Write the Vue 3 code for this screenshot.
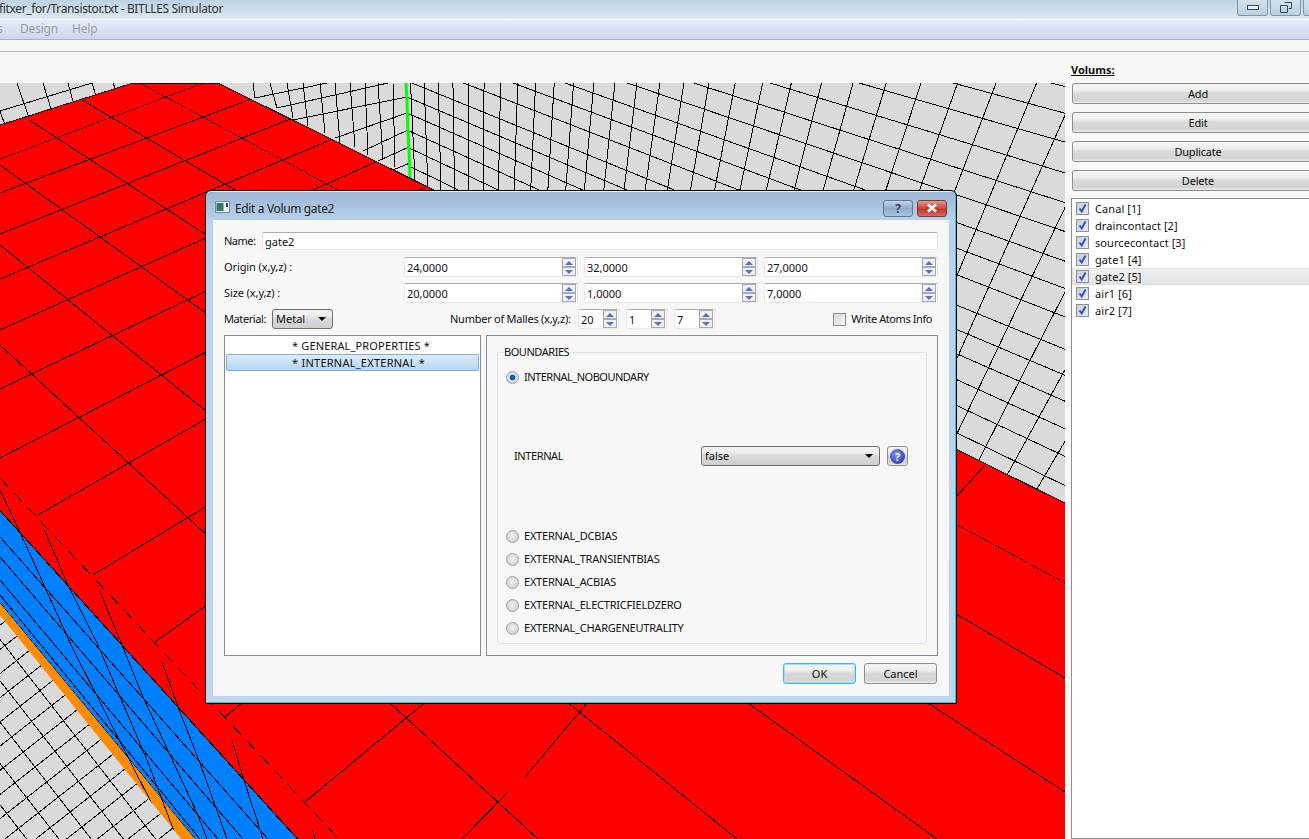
<script setup>
const edgeY = (x) => 83 + 0.496 * (x - 218)
const floorLines = [
  [140,83,1065,583,'dot'],[82,100,1065,678],[0,101,1065,792],[0,165,937,839],[0,245,737,839],[0,345,538,839],
  [0,159,254,64,'dot'],[0,193,254,98],[0,234,293,118],[0,279,335,138],[0,330,378,161],[0,389,440,180],[0,458,440,232],[38,515,440,285],
  [93,575,440,365],[155,642,440,440],[225,717,320,640],[305,802,440,690],[462,839,508,792],[525,777,640,640],[957,496,985,465],
  [0,478,337,837,'dash']
]
const bandLines = [
  [0,537,268,839],[0,557,243,839],[0,580,218,839],[0,595,200,839],
  [0,490,20,532],[20,532,72,647],[72,647,133,767],[133,767,170,839],
  [38,515,67,583],[67,583,97,643],[97,643,147,760],[147,760,177,839],
  [93,575,120,640],[120,640,143,697],[143,697,197,813],[197,813,207,839],
  [155,642,178,707],[178,707,200,763],[200,763,227,839],
  [225,717,243,777],[243,777,263,839],[305,802,315,839]
]
const VP1 = [-650,-350], VP3 = [473,1447]
const rightRows = [165,147,130,113,97,81,61,43.5,26.7,8.4,-9.4,-27.7,-46.7,-64.5,-81].map((y) => {
  const s = (y - VP1[1]) / (407 - VP1[0])
  return [407, y, 1065, y + s * 658]
})
const rightCols = []
for (let x = 415; x < 1100; x += 13 + (x - 420) * 0.028) {
  const y = edgeY(x)
  const s = (x - VP3[0]) / (VP3[1] - y)
  rightCols.push([x, y, x + s * (y + 20), -20])
}
const leftWall = [
  [388,83,277,108],[327,83,255,98],[407,97,293,120],[407,113,335,138],[408,130,363,151],[409,147,378,161],[410,163,393,170],
  [253,83,255,98],[270,83,277,108],[287,83,293,118],[303,83,308,126],[320,83,325,133],[335,83,340,143],[350,83,355,147],[365,83,368,155],[378,83,383,160],[393,83,395,167],
  [0,111,92,83],[0,111,5,125],[17,83,29,118],[43,83,52,112],[68,83,74,105],[92,83,96,96],[113,83,115,88]
]
const lattice = []
for (let k = -30; k <= 30; k++) {
  const bx = 35 + k * 20, by = 767 - k * 15.7
  lattice.push([bx - 40 * 11.7, by - 40 * 15, bx + 40 * 11.7, by + 40 * 15])
  const cx = 35 + k * 11.7, cy = 767 + k * 15
  lattice.push([cx - 40 * 20, cy + 40 * 15.7, cx + 40 * 20, cy - 40 * 15.7])
}
const volumes = ['Canal [1]','draincontact [2]','sourcecontact [3]','gate1 [4]','gate2 [5]','air1 [6]','air2 [7]']
const origin = ['24,0000','32,0000','27,0000']
const size = ['20,0000','1,0000','7,0000']
const malles = ['20','1','7']
const externals = ['EXTERNAL_DCBIAS','EXTERNAL_TRANSIENTBIAS','EXTERNAL_ACBIAS','EXTERNAL_ELECTRICFIELDZERO','EXTERNAL_CHARGENEUTRALITY']
</script>

<template>
  <div class="app">
    <div class="titlebar">
      <span class="title-text">fitxer_for/Transistor.txt - BITLLES Simulator</span>
      <div class="win-btns">
        <div class="win-btn"><span class="glyph-min"></span></div>
        <div class="win-btn">
          <svg width="12" height="11" viewBox="0 0 12 11"><path d="M4.5 .5h7v6h-3M.5 3.5h7v7h-7z" fill="none" stroke="#3a4a5a"/></svg>
        </div>
        <div class="win-btn"></div>
      </div>
    </div>
    <div class="menubar">
      <span class="menu-s">s</span><span class="menu-a">Design</span><span class="menu-b">Help</span>
    </div>
    <div class="toolstrip"></div>
    <div class="main">
      <div class="left-col">
        <div class="spacer"></div>
        <svg class="scene" width="1065" height="756" viewBox="0 83 1065 756">
          <defs>
            <clipPath id="floorClip"><polygon points="0,125 133,83 218,83 1065,503 1065,839 298,839 0,510" /></clipPath>
            <clipPath id="rightClip"><polygon points="407,83 1065,83 1065,503 410,178" /></clipPath>
            <clipPath id="grayClip"><polygon points="0,615 181,839 0,839" /></clipPath>
            <clipPath id="bandClip"><polygon points="0,480 320,839 181,839 0,615" /></clipPath>
          </defs>
          <rect x="0" y="83" width="1065" height="756" fill="#dadada" />
          <g class="ln" clip-path="url(#rightClip)">
            <line v-for="(l, i) in rightRows" :key="'r' + i" :x1="l[0]" :y1="l[1]" :x2="l[2]" :y2="l[3]" />
            <line v-for="(l, i) in rightCols" :key="'c' + i" :x1="l[0]" :y1="l[1]" :x2="l[2]" :y2="l[3]" />
          </g>
          <g class="ln">
            <line v-for="(l, i) in leftWall" :key="'w' + i" :x1="l[0]" :y1="l[1]" :x2="l[2]" :y2="l[3]" />
          </g>
          <g class="ln" clip-path="url(#grayClip)">
            <line v-for="(l, i) in lattice" :key="'g' + i" :x1="l[0]" :y1="l[1]" :x2="l[2]" :y2="l[3]" />
          </g>
          <polyline points="406,83 407,100 408,130 409,150 410,178" fill="none" stroke="#00ff00" stroke-width="3" />
          <polygon points="-5,126.6 133,83 218,83 1070,505.6 1070,845 303,845 -5,505" fill="#ff0000" stroke="#000" stroke-width="1" shape-rendering="crispEdges" />
          <polygon points="-5,505 303,845 200,845 -5,597" fill="#0080ff" stroke="#000" stroke-width="1" shape-rendering="crispEdges" />
          <polygon points="-5,597 200,845 186,845 -5,609" fill="#ff8c00" />
          <g class="ln" clip-path="url(#floorClip)">
            <line v-for="(l, i) in floorLines" :key="'f' + i" :class="l[4]" :x1="l[0]" :y1="l[1]" :x2="l[2]" :y2="l[3]" />
          </g>
          <g class="ln" clip-path="url(#bandClip)">
            <line v-for="(l, i) in bandLines" :key="'b' + i" :x1="l[0]" :y1="l[1]" :x2="l[2]" :y2="l[3]" />
          </g>
        </svg>
      </div>
      <aside class="side">
        <div class="side-title">Volums:</div>
        <button class="qbtn side-btn">Add</button>
        <button class="qbtn side-btn">Edit</button>
        <button class="qbtn side-btn">Duplicate</button>
        <button class="qbtn side-btn">Delete</button>
        <div class="vol-list">
          <div v-for="v in volumes" :key="v" class="vol-row" :class="{ current: v === 'gate2 [5]' }">
            <span class="check on">
              <svg width="11" height="11" viewBox="0 0 11 11"><path d="M2.5 5.5l2.2 3L8.5 1.5" fill="none" stroke="#2f55b8" stroke-width="2" /></svg>
            </span>
            <span>{{ v }}</span>
          </div>
        </div>
      </aside>
    </div>

    <div class="dialog">
      <div class="dlg-title">
        <svg class="dlg-icon" width="15" height="12" viewBox="0 0 15 12">
          <rect x=".5" y=".5" width="14" height="11" fill="#e8eef0" stroke="#7c8a94" />
          <rect x="1.5" y="2" width="7" height="8" fill="#2f7a6c" />
          <rect x="11" y="2" width="2" height="4" fill="#3a4a5a" />
        </svg>
        <span class="dlg-caption">Edit a Volum gate2</span>
        <div class="dlg-btn help-cap">?</div>
        <div class="dlg-btn close-cap">
          <svg width="14" height="10" viewBox="0 0 14 10"><path d="M3 1.5l8 7M11 1.5l-8 7" stroke="#fff" stroke-width="2.4" fill="none" /></svg>
        </div>
      </div>
      <div class="client">
        <div class="row name-row">
          <label class="name-label up1">Name:</label>
          <div class="field name-field">gate2</div>
        </div>
        <div class="row triple">
          <label class="triple-label up1">Origin (x,y,z) :</label>
          <div v-for="o in origin" :key="o" class="field spin">
            <span>{{ o }}</span>
            <span class="spin-btns"><i class="up"></i><i class="down"></i></span>
          </div>
        </div>
        <div class="row triple">
          <label class="triple-label up1">Size (x,y,z) :</label>
          <div v-for="s in size" :key="s" class="field spin">
            <span>{{ s }}</span>
            <span class="spin-btns"><i class="up"></i><i class="down"></i></span>
          </div>
        </div>
        <div class="row mat-row">
          <label class="mat-label up1">Material:</label>
          <div class="combo mat-combo"><span class="up1">Metal</span><i class="arrow"></i></div>
          <label class="malles-label up1">Number of Malles (x,y,z):</label>
          <div v-for="m in malles" :key="m" class="field spin small-spin">
            <span>{{ m }}</span>
            <span class="spin-btns"><i class="up"></i><i class="down"></i></span>
          </div>
          <div class="atoms">
            <span class="check"></span>
            <span class="atoms-text up1">Write Atoms Info</span>
          </div>
        </div>
        <div class="panels">
          <div class="tree">
            <div class="tree-item general">* GENERAL_PROPERTIES *</div>
            <div class="tree-item selected">* INTERNAL_EXTERNAL *</div>
          </div>
          <div class="pane">
            <div class="group">
              <span class="group-title">BOUNDARIES</span>
              <div class="radio-row noboundary"><span class="radio on"></span><span class="up1">INTERNAL_NOBOUNDARY</span></div>
              <div class="internal-row">
                <span class="internal-label up1">INTERNAL</span>
                <div class="combo false-combo"><span class="up1">false</span><i class="arrow"></i></div>
                <div class="qbtn help-btn"><span class="help-ball">?</span></div>
              </div>
              <div class="externals">
                <div v-for="e in externals" :key="e" class="radio-row"><span class="radio"></span><span class="up1">{{ e }}</span></div>
              </div>
            </div>
          </div>
        </div>
        <div class="actions">
          <button class="qbtn action default">OK</button>
          <button class="qbtn action">Cancel</button>
        </div>
      </div>
    </div>
  </div>
</template>

<style>
html, body { margin: 0; overflow: hidden; background: #f8f8f8; }
</style>

<style scoped>
.app {
  position: relative; width: 1309px; height: 839px; overflow: hidden;
  display: flex; flex-direction: column;
  font-family: "Noto Sans", "DejaVu Sans", sans-serif; font-size: 11px; color: #111; background: #f8f8f8;
}
.up1 { padding-bottom: 2px; }
.titlebar {
  height: 19px; flex: none; position: relative; display: flex; align-items: center;
  background: linear-gradient(#bfd2e2, #dbe8f2);
  border-bottom: 1px solid #fff;
}
.title-text { margin-left: -1px; font-size: 12px; letter-spacing: -.36px; color: #333; white-space: nowrap; padding-bottom: 2px; }
.win-btns { margin-left: auto; display: flex; gap: 2px; align-self: flex-start; margin-right: -25px; }
.win-btn {
  width: 29px; height: 15px; border: 1px solid #7f96ad; border-top: none; border-radius: 0 0 3px 3px;
  display: flex; align-items: center; justify-content: center;
  background: linear-gradient(#d3e0ea, #bcd0e0);
}
.glyph-min { width: 10px; height: 3px; border: 1px solid #3a4a5a; background: #e8eef3; }
.menubar {
  height: 19px; flex: none; display: flex; align-items: center;
  background: linear-gradient(#e6eaf8, #cdd6f0);
  border-bottom: 1px solid #aeb0c0; color: #9c9c9c; font-size: 12px; letter-spacing: -.2px;
}
.menu-s { margin-left: -3px; width: 23px; padding-bottom: 2px; }
.menu-a { width: 52px; padding-bottom: 2px; }
.menu-b { padding-bottom: 2px; }
.toolstrip { height: 11px; flex: none; border-bottom: 1px solid #b6b6b6; }
.main { flex: 1; display: flex; min-height: 0; }
.left-col { width: 1065px; flex: none; display: flex; flex-direction: column; }
.spacer { height: 31px; flex: none; }
.scene { display: block; flex: none; }
.ln line { stroke: #000; stroke-width: 1; shape-rendering: crispEdges; }
.ln line.dot { stroke-dasharray: 2 1; }
.ln line.dash { stroke-dasharray: 12 8; }
.side { flex: none; width: 252px; padding-left: 6px; display: flex; flex-direction: column; }
.side-title { height: 31px; line-height: 36px; font-weight: 700; text-decoration: underline; }
.qbtn {
  font: inherit; color: #111; padding: 0; box-sizing: border-box;
  border: 1px solid #8f8f8f; border-radius: 3px;
  background: linear-gradient(#f4f4f4 0, #f0f0f0 30%, #d9d9d9 50%, #d3d3d3 85%, #ececec 100%);
}
.side-btn { width: 252px; height: 21px; margin: 0 0 8px 1px; flex: none; letter-spacing: -.2px; }
.vol-list {
  margin-top: -1px; flex: 1; background: #fff; border: 1px solid #8f8f8f; border-right: none;
  padding-top: 1px; width: 260px; box-sizing: border-box;
}
.vol-row { height: 17px; display: flex; align-items: center; gap: 6px; padding-left: 4px; letter-spacing: .08px; }
.vol-row.current { background: linear-gradient(#f2f2f2, #e2e2e2); box-shadow: inset 0 0 0 1px #dedede; }
.check {
  width: 13px; height: 13px; box-sizing: border-box; flex: none; border: 1px solid #8e8f8f;
  background: linear-gradient(135deg, #d6d8dc, #f5f5f5); display: inline-flex; align-items: center; justify-content: center;
}
.check.on { background: linear-gradient(135deg, #c6cde0, #e8ebf3); }

.dialog {
  position: absolute; left: 205px; top: 190px; width: 752px; height: 514px; box-sizing: border-box;
  border: 1px solid #000; border-radius: 6px 6px 0 0; padding: 0 7px 7px;
  background: linear-gradient(#9ab4d2 0, #b9d3ed 30px, #bdd6ee 100%);
  box-shadow: inset 0 -1px 0 #3ec1d8, inset -1px 0 0 #3ec1d8, inset 0 1px 0 #e8f0f8;
  display: flex; flex-direction: column;
}
.dlg-title { height: 29px; flex: none; display: flex; align-items: center; position: relative; }
.dlg-icon { margin-left: 2px; margin-top: 3px; }
.dlg-caption { margin-left: 5px; font-size: 12px; letter-spacing: -.36px; color: #222; margin-top: 6px; }
.dlg-btn {
  height: 17px; width: 30px; box-sizing: border-box; border: 1px solid #5f7a97; border-radius: 3px; margin-top: 5px;
  display: flex; align-items: center; justify-content: center;
}
.help-cap { margin-left: auto; background: linear-gradient(#c4d6e6, #8facc8 50%, #a9c3dc); font-weight: 700; font-size: 12px; color: #445; }
.close-cap { margin-left: 4px; margin-right: 2px; background: linear-gradient(#e29a8e, #c4392c 55%, #d46a5c); border-color: #7a3a3a; }
.client {
  flex: 1; background: #f7f7f7; padding: 12px 11px 12px; display: flex; flex-direction: column; min-height: 0;
}
.row { display: flex; align-items: center; flex: none; }
.field {
  box-sizing: border-box; background: #fff; border: 1px solid #e3e7ec; border-top-color: #abadb3; border-radius: 2px;
  display: flex; align-items: center; padding-left: 2px;
}
.name-row { height: 18px; margin-bottom: 7px; }
.name-label { width: 38px; letter-spacing: -.5px; }
.name-field { flex: 1; height: 18px; }
.triple { height: 20px; margin-bottom: 6px; gap: 6px; }
.triple-label { width: 174px; letter-spacing: -.1px; }
.triple .field { width: 174px; height: 20px; }
.spin { position: relative; font-size: 11px; }
.spin-btns { margin-left: auto; margin-right: 1px; display: flex; flex-direction: column; gap: 0; }
.spin-btns i {
  width: 14px; height: 9px; box-sizing: border-box; border: 1px solid #a6a8b4; background: #eef0f4;
  display: flex; align-items: center; justify-content: center;
}
.spin-btns i::after { content: ""; border-left: 4px solid transparent; border-right: 4px solid transparent; }
.spin-btns .up::after { border-bottom: 4px solid #5a70c8; }
.spin-btns .down::after { border-top: 4px solid #5a70c8; }
.mat-row { height: 20px; margin-bottom: 6px; }
.mat-label { width: 48px; letter-spacing: -.4px; }
.combo {
  box-sizing: border-box; height: 20px; border: 1px solid #6f6f6f; border-radius: 3px; padding: 0 6px 0 3px;
  display: flex; align-items: center; justify-content: space-between;
  background: linear-gradient(#f2f2f2 0, #eeeeee 30%, #d9d9d9 50%, #cfcfcf 100%);
}
.arrow { border-left: 4px solid transparent; border-right: 4px solid transparent; border-top: 4px solid #000; }
.mat-combo { width: 61px; }
.malles-label { margin-left: 117px; width: 128px; letter-spacing: -.25px; }
.small-spin { width: 41px; height: 20px; margin-right: 7px; }
.atoms { margin-left: auto; padding-right: 6px; display: flex; align-items: center; gap: 5px; }
.atoms-text { letter-spacing: -.42px; }
.panels { display: flex; gap: 5px; height: 321px; flex: none; margin-bottom: 7px; }
.tree { width: 257px; box-sizing: border-box; border: 1px solid #8a8a9a; background: #fff; padding: 1px; }
.tree-item { height: 17px; line-height: 17px; padding-left: 66px; }
.tree-item.general { letter-spacing: .15px; }
.tree-item.selected {
  box-sizing: border-box; line-height: 15px; border: 1px solid #7dadd8; border-radius: 2px; padding-left: 65px; letter-spacing: .25px;
  background: linear-gradient(#dcecfb, #b4d6f3);
}
.pane { flex: 1; box-sizing: border-box; border: 1px solid #8a8a9a; padding: 16px 10px 11px; }
.group {
  position: relative; height: 100%; box-sizing: border-box; border: 1px solid #dbe1ea; border-radius: 3px;
  padding: 16px 0 0 8px;
}
.group-title { position: absolute; left: 6px; top: -8px; padding: 0 2px 0 0; background: #f7f7f7; line-height: 13px; letter-spacing: -.45px; }
.radio-row { display: flex; align-items: center; height: 16px; gap: 5px; letter-spacing: -.22px; }
.radio-row.noboundary { letter-spacing: -.5px; }
.radio {
  width: 13px; height: 13px; box-sizing: border-box; border-radius: 50%; border: 1px solid #a0a0a0;
  background: radial-gradient(circle at 50% 45%, #f0f0f0, #c8c8c8);
  flex: none;
}
.radio.on {
  background: radial-gradient(circle, #1a6fc0 0, #0d4f9a 30%, #cfd8e4 40%, #e4e4e4 100%);
}
.internal-row { display: flex; align-items: center; height: 20px; margin-top: 61px; margin-left: 8px; }
.internal-label { width: 187px; letter-spacing: -.4px; }
.false-combo { width: 179px; }
.help-btn { width: 21px; height: 20px; margin-left: 7px; display: flex; align-items: center; justify-content: center; }
.help-ball {
  width: 15px; height: 15px; border-radius: 50%; background: radial-gradient(circle at 40% 35%, #7f8fe8, #1626a8);
  color: #fff; font-weight: 700; font-size: 11px; line-height: 15px; text-align: center;
}
.externals { margin-top: 62px; display: flex; flex-direction: column; gap: 7px; }
.actions { display: flex; justify-content: flex-end; gap: 8px; flex: none; height: 21px; margin-right: 1px; }
.action { width: 73px; height: 21px; }
.default { border-color: #3bb8e8; box-shadow: inset 0 0 0 1px #a8def4; }
</style>
